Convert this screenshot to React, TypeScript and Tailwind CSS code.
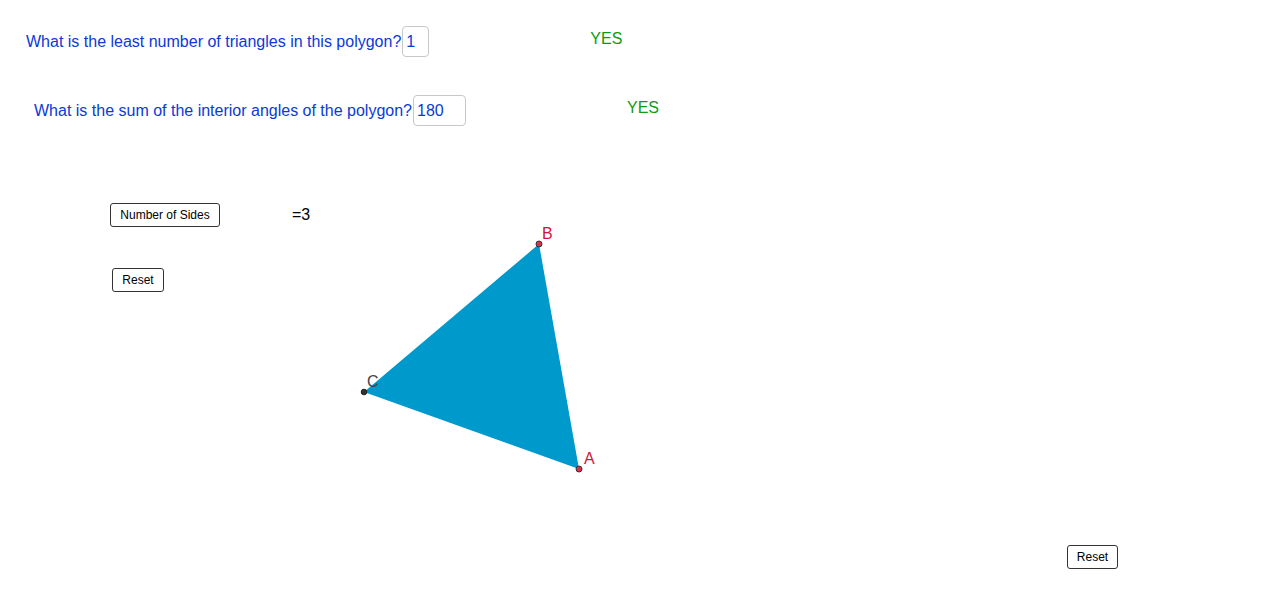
import React from "react";

const font = { fontFamily: '"Liberation Sans", Arial, sans-serif' };

function Btn({ label, className }: { label: string; className: string }) {
  return (
    <button
      className={`flex h-[24px] items-center justify-center rounded-[3px] border border-[#333] bg-white text-[12px] leading-none text-black ${className}`}
      style={font}
    >
      {label}
    </button>
  );
}

function Question({ text, value, boxW, className }: { text: string; value: string; boxW: string; className: string }) {
  return (
    <div className={`flex h-[31px] items-center text-[16px] ${className}`}>
      <span className="text-[#0a3ad8]">{text}</span>
      <span className={`ml-[1px] flex h-[31px] items-center rounded-[4px] border border-[#c8c8c8] pl-[3px] text-[#0a3ad8] ${boxW}`}>{value}</span>
      <span className="ml-[161px] -mt-[6px] text-[#109a10]">YES</span>
    </div>
  );
}

export default function App() {
  return (
    <div className="relative h-[604px] w-[1280px] overflow-hidden bg-white" style={font}>
      <div className="flex flex-col pt-[26px]">
        <Question text="What is the least number of triangles in this polygon?" value="1" boxW="w-[27px]" className="ml-[26px]" />
        <Question text="What is the sum of the interior angles of the polygon?" value="180" boxW="w-[53px]" className="ml-[34px] mt-[38px]" />
        <div className="mt-[77px] ml-[110px] flex items-center">
          <Btn label="Number of Sides" className="w-[110px]" />
          <span className="ml-[72px] -mt-[1px] text-[16px] text-black">=3</span>
        </div>
        <div className="mt-[41px] ml-[112px] flex">
          <Btn label="Reset" className="w-[52px]" />
        </div>
      </div>

      <div className="absolute left-[1067px] top-[545px]">
        <Btn label="Reset" className="w-[51px]" />
      </div>

      <svg className="absolute left-0 top-0" width="1280" height="604">
        <polygon points="579,469 539,244 364,392" fill="#0099cc" />
        <circle cx="579" cy="469" r="3" fill="#d9304d" stroke="#333" strokeWidth="1" />
        <circle cx="539" cy="244" r="3" fill="#d9304d" stroke="#333" strokeWidth="1" />
        <circle cx="364" cy="392" r="2.8" fill="#333" stroke="#222" strokeWidth="1" />
        <text x="584" y="464" fontSize="16" fill="#d4143c" style={font}>A</text>
        <text x="542" y="239" fontSize="16" fill="#d4143c" style={font}>B</text>
        <text x="367" y="387" fontSize="16" fill="#444" style={font}>C</text>
      </svg>
    </div>
  );
}
